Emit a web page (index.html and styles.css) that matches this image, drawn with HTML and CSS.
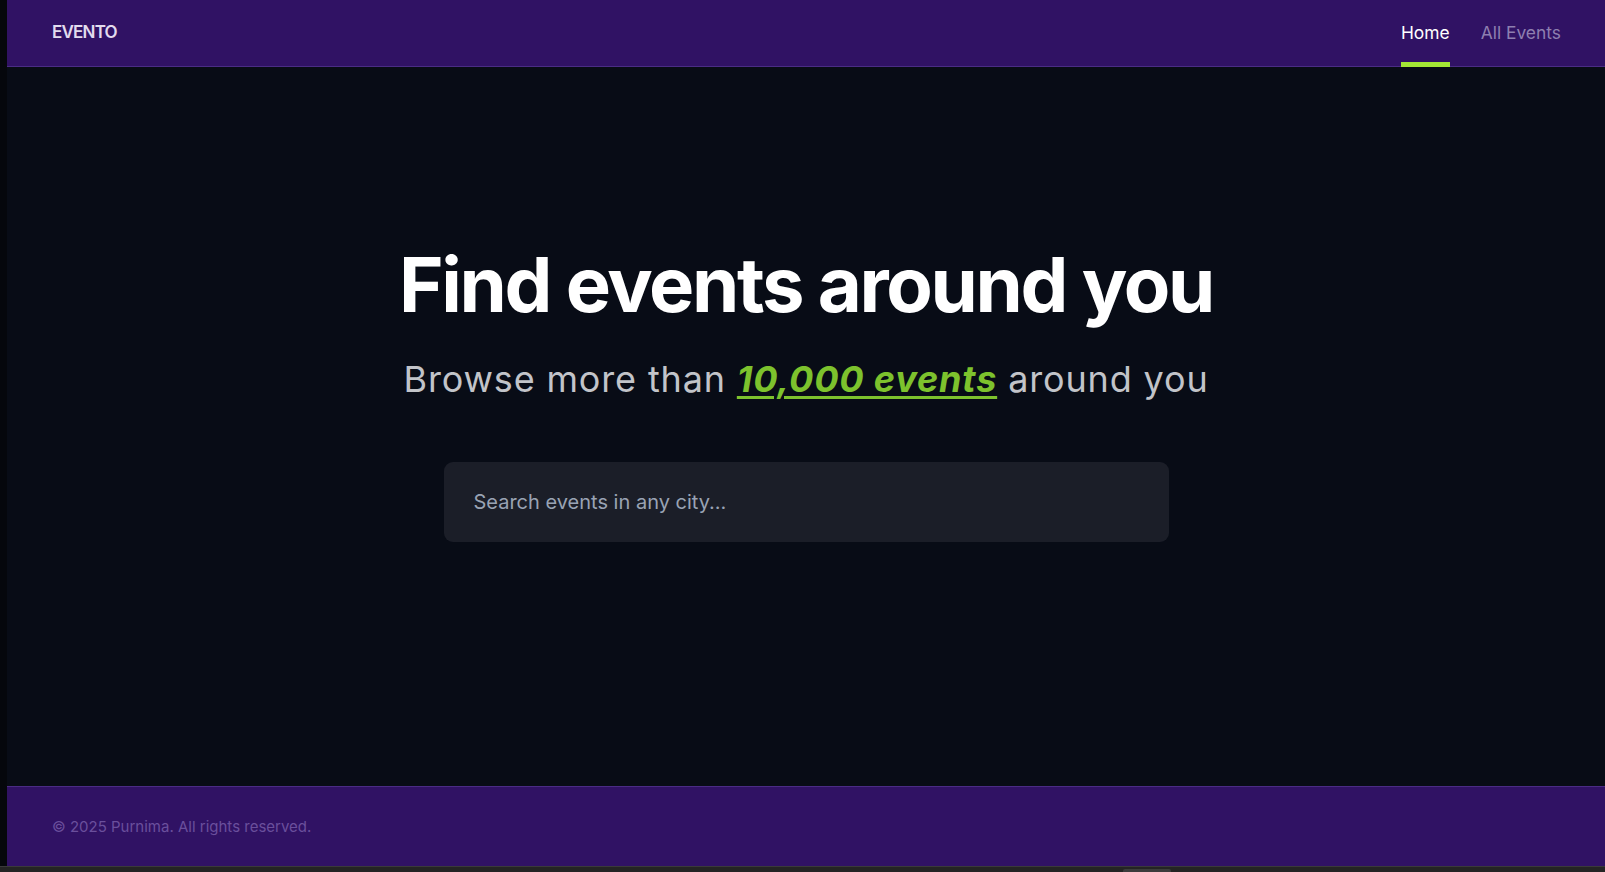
FILE: index.html
```html
<!DOCTYPE html>
<html lang="en">
<head>
<meta charset="utf-8">
<title>Evento</title>
<link rel="stylesheet" href="styles.css">
</head>
<body>
<div class="frame">
  <div class="gutter"></div>
  <div class="page">
    <header class="header">
      <a class="logo" href="#">EVENTO</a>
      <nav class="nav">
        <a class="nav-link active" href="#">Home</a>
        <a class="nav-link" href="#">All Events</a>
      </nav>
    </header>
    <main class="main">
      <h1 class="title">Find events around you</h1>
      <p class="subtitle">Browse more than <a class="highlight" href="#">10,000 events</a> around you</p>
      <form class="search">
        <input class="search-input" type="text" placeholder="Search events in any city...">
      </form>
    </main>
    <footer class="footer">
      <small class="copy">© 2025 Purnima. All rights reserved.</small>
    </footer>
  </div>
</div>
<div class="bottombar"><div class="thumb"></div></div>
</body>
</html>
```
FILE: styles.css
```css
* { box-sizing: border-box; }
html, body { margin: 0; padding: 0; height: 100%; }
body {
  background: #05070c;
  font-family: Inter, "Noto Sans", "Liberation Sans", sans-serif;
  display: flex;
  flex-direction: column;
  overflow: hidden;
}
.frame {
  flex: 1;
  display: flex;
  min-height: 0;
}
.gutter {
  width: 7px;
  background: #05070c;
  flex: none;
}
.page {
  flex: 1;
  display: flex;
  flex-direction: column;
  background: #080c16;
}
.header {
  height: 67px;
  flex: none;
  background: #301264;
  border-bottom: 1px solid #4a2c85;
  display: flex;
  align-items: center;
  justify-content: space-between;
  padding: 0 44px 2px 45px;
}
.logo {
  color: #e2dbee;
  font-weight: 600;
  font-size: 17px;
  letter-spacing: -0.8px;
  text-decoration: none;
}
.nav {
  display: flex;
  align-self: stretch;
  gap: 31px;
}
.nav-link {
  position: relative;
  display: flex;
  align-items: center;
  color: #8e7fb0;
  font-size: 17.4px;
  text-decoration: none;
}
.nav-link.active { color: #ffffff; }
.nav-link.active::after {
  content: "";
  position: absolute;
  left: 0;
  right: 0;
  bottom: -3px;
  height: 5px;
  background: #a3e635;
}
.main {
  flex: 1;
  display: flex;
  flex-direction: column;
  align-items: center;
  padding-top: 179px;
}
.title {
  margin: 0;
  color: #ffffff;
  font-size: 76px;
  line-height: 77px;
  font-weight: 700;
  letter-spacing: -2.35px;
}
.subtitle {
  margin: 35px 0 0;
  color: #c2c4c9;
  font-size: 36px;
  line-height: 42px;
  letter-spacing: 0.85px;
}
.highlight {
  color: #7dc22d;
  font-weight: 700;
  font-style: italic;
  text-decoration: underline;
  text-decoration-thickness: 3px;
  text-underline-offset: 4px;
}
.search {
  margin-top: 62px;
  width: 725px;
}
.search-input {
  display: block;
  width: 100%;
  height: 80px;
  border: none;
  outline: none;
  border-radius: 9px;
  background: #1b1e28;
  padding: 0 30px;
  font-family: inherit;
  font-size: 20px;
  color: #ffffff;
}
.search-input::placeholder { color: #99a3b4; }
.footer {
  height: 80px;
  flex: none;
  background: #301264;
  border-top: 1px solid #4a2c85;
  display: flex;
  align-items: center;
  padding: 0 44px 0 45px;
}
.copy {
  color: #6a4f9c;
  font-size: 15px;
}
.bottombar {
  height: 6px;
  flex: none;
  background: #242424;
  border-top: 1px solid #3a3a3a;
  position: relative;
}
.thumb {
  position: absolute;
  left: 1123px;
  width: 48px;
  top: 2px;
  height: 4px;
  border-radius: 2px 2px 0 0;
  background: #3c3c3c;
}
```
